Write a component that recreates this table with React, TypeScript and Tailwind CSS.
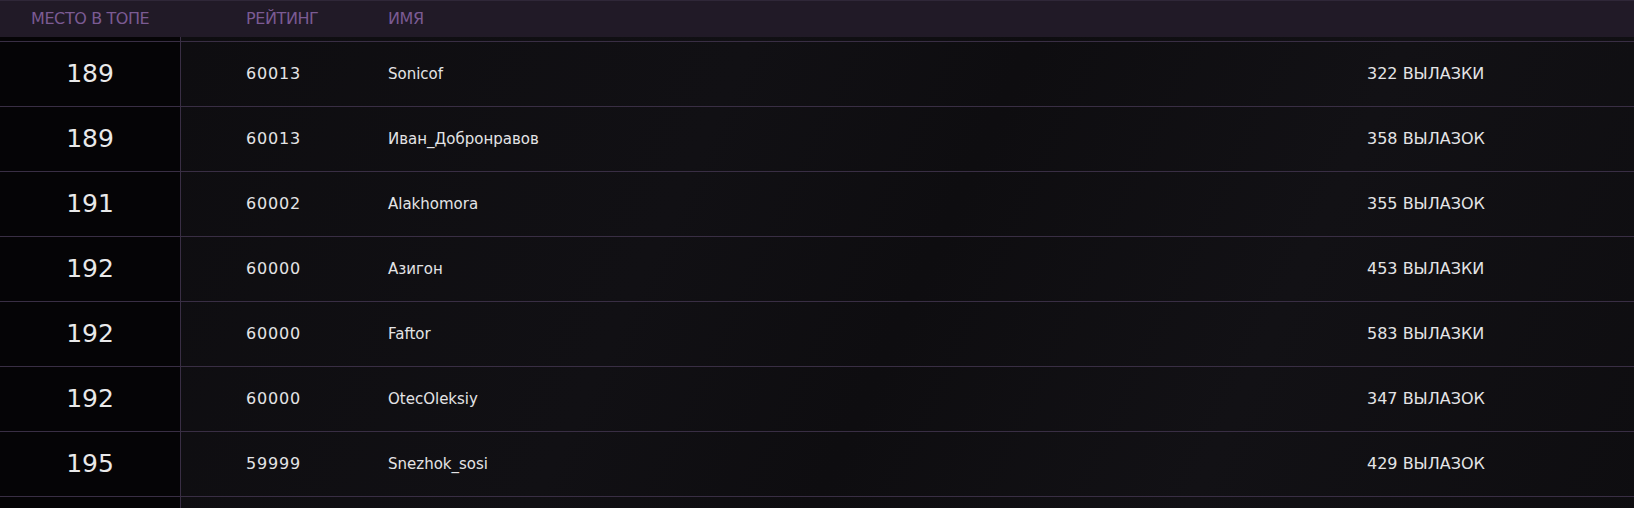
import { FC } from "react";

type Entry = {
    place: number;
    rating: number;
    name: string;
    raids: string;
};

const entries: Entry[] = [
    { place: 189, rating: 60013, name: "Sonicof", raids: "322 ВЫЛАЗКИ" },
    { place: 189, rating: 60013, name: "Иван_Добронравов", raids: "358 ВЫЛАЗОК" },
    { place: 191, rating: 60002, name: "Alakhomora", raids: "355 ВЫЛАЗОК" },
    { place: 192, rating: 60000, name: "Азигон", raids: "453 ВЫЛАЗКИ" },
    { place: 192, rating: 60000, name: "Faftor", raids: "583 ВЫЛАЗКИ" },
    { place: 192, rating: 60000, name: "OtecOleksiy", raids: "347 ВЫЛАЗОК" },
    { place: 195, rating: 59999, name: "Snezhok_sosi", raids: "429 ВЫЛАЗОК" },
];

const Row: FC<{ entry?: Entry }> = ({ entry }) => {
    return (
        <div className="flex h-[65px] border-t border-[#392e44]">
            <div className="w-[181px] shrink-0 border-r border-[#392e44] bg-[#050406] flex items-center justify-center text-[25px] text-[#e9e9ea]">
                {entry?.place}
            </div>
            <div className="flex-1 flex items-center text-[16px] text-[#e4e4e6]">
                <div className="w-[142px] pl-[65px] box-content tracking-[0.8px]">{entry?.rating}</div>
                <div className="flex-1 text-[15px]">{entry?.name}</div>
                <div className="w-[267px]">{entry?.raids}</div>
            </div>
        </div>
    );
};

export default function App() {
    return (
        <div
            className="w-full h-[508px] overflow-hidden bg-[#0e0d10]"
            style={{ fontFamily: '"DejaVu Sans", "Liberation Sans", sans-serif' }}
        >
            {/* шапка таблицы */}
            <div className="h-[37px] border-t border-[#2f2738] bg-[#211a27] flex items-center text-[16px] uppercase tracking-[-0.4px] text-[#7b5b93]">
                <div className="w-[246px] pl-[31px]">Место в топе</div>
                <div className="w-[142px]">Рейтинг</div>
                <div>Имя</div>
            </div>
            <div className="relative bg-[linear-gradient(115deg,#0d0c0f_0%,#111014_40%,#0e0d10_55%,#121115_75%,#0e0d10_100%)]">
                <div className="flex h-[4px]">
                    <div className="w-[181px] shrink-0 border-r border-[#392e44] bg-[#050406]" />
                </div>
                {entries.map((entry, i) => (
                    <Row key={i} entry={entry} />
                ))}
                {/* следующая строка уходит за край */}
                <Row />
            </div>
        </div>
    );
}
